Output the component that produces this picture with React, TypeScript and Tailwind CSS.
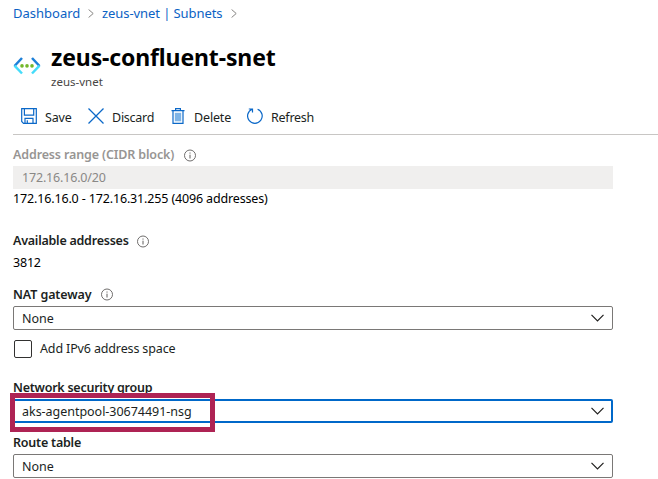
import React from "react";

const Info = () => (
  <svg className="mt-px h-[13px] w-[13px] shrink-0" viewBox="0 0 13 13" fill="none" stroke="#605e5c">
    <circle cx="6" cy="6.5" r="5.5" strokeWidth="0.9" />
    <path d="M6 5.7V9.5M6 3.5V4.6" strokeWidth="1" />
  </svg>
);

const Chevron = () => (
  <svg className="h-2 w-[14px] shrink-0" viewBox="0 0 14 8" fill="none" stroke="#201f1e" strokeWidth="1.2">
    <path d="M0.5 0.8L6.5 6.9L12.5 0.8" />
  </svg>
);

const Crumb = () => (
  <svg className="h-[9px] w-[6px] shrink-0" viewBox="0 0 6 9" fill="none" stroke="#868482" strokeWidth="1">
    <path d="M0.6 0.5L5.2 4.5L0.6 8.5" />
  </svg>
);

function Label({ text, className, info }: { text: string; className: string; info?: boolean }) {
  return (
    <div className="flex h-5 items-center">
      <span className={"shrink-0 font-semibold " + className}>{text}</span>
      {info && <Info />}
    </div>
  );
}

function Select({ text, className, active }: { text: string; className: string; active?: boolean }) {
  return (
    <div
      className={
        "flex h-6 w-[600px] items-center justify-between rounded-[2px] " +
        (active ? "border-2 border-[#0068c9] pr-[6px] pl-[7px]" : "border border-[#7a7876] pr-[7px] pl-2")
      }
    >
      <span className={"mt-0.5 " + className}>{text}</span>
      <Chevron />
    </div>
  );
}

export default function App() {
  return (
    <div className="h-[479px] w-[658px] overflow-hidden bg-white pl-[13px] font-['Noto_Sans','Open_Sans',sans-serif] text-[12.5px] leading-5 whitespace-nowrap text-[#201f1e]">
      <nav className="flex h-[26px] items-center text-[13px] text-[#0b62c4]">
        <span className="w-[75px]">Dashboard</span>
        <Crumb />
        <span className="ml-2 w-[129px] tracking-[-0.08px]">zeus-vnet | Subnets</span>
        <Crumb />
      </nav>

      <header className="flex h-[74px] pt-[17px]">
        <svg className="mt-[14px] h-[18px] w-[28px] shrink-0" viewBox="0 0 28 18" fill="none" strokeWidth="2.5">
          <path d="M9 1L1.5 9" stroke="#1c7fd8" />
          <path d="M1.5 8.7L9 16.5" stroke="#45dcfa" />
          <path d="M19 1L26.5 9" stroke="#1c7fd8" />
          <path d="M26.5 8.7L19 16.5" stroke="#45dcfa" />
          <g fill="#74b72b">
            <circle cx="9" cy="8.9" r="1.8" />
            <circle cx="14" cy="8.9" r="1.8" />
            <circle cx="19" cy="8.9" r="1.8" />
          </g>
        </svg>
        <div className="ml-[10px]">
          <h1 className="h-[29px] text-[23px] leading-7 font-bold tracking-[-0.13px] text-black">zeus-confluent-snet</h1>
          <p className="text-[11.5px] leading-5 text-[#484644]">zeus-vnet</p>
        </div>
      </header>

      <div className="flex h-[35px] items-center border-b border-[#c8c6c4] pl-2">
        <svg className="-mt-0.5 h-4 w-4 shrink-0" viewBox="0 0 16 16" fill="none" stroke="#0b68c8" strokeWidth="1.2">
          <path d="M.7.7H15.3V15.3H2.5L.7 13.5Z" />
          <path d="M3.4.7V7.2H12.7V.7M4 15V10.4H12V15M6.3 12.3V15" />
        </svg>
        <span className="mt-px ml-2 w-[43px] tracking-[-0.2px]">Save</span>
        <svg className="-mt-0.5 h-4 w-4 shrink-0" viewBox="0 0 16 16" fill="none" stroke="#0b68c8" strokeWidth="1.3">
          <path d="M.5.5L15.5 15.5M15.5.5L.5 15.5" />
        </svg>
        <span className="mt-px ml-2 w-[59px] tracking-[-0.25px]">Discard</span>
        <svg className="-mt-0.5 h-4 w-[14px] shrink-0" viewBox="0 0 14 16" fill="none" stroke="#0b68c8" strokeWidth="1.2">
          <path d="M.5 2.6H13.5M4.6 2.4V.6H9.4V2.4M2 2.8V15.3H12V2.8" />
          <path d="M3.8 4.8H10.2V13.3H3.8Z" fill="#7fb4e6" stroke="none" />
        </svg>
        <span className="mt-px ml-[9px] w-[53px] tracking-[-0.15px]">Delete</span>
        <svg className="-mt-0.5 h-4 w-4 shrink-0" viewBox="0 0 16 16" fill="none" stroke="#0b68c8" strokeWidth="1.2">
          <path d="M5.2 1.2A7.3 7.3 0 1 0 10.6 1.2M1.8 1H5.5V4.6" />
        </svg>
        <span className="mt-px ml-2 tracking-[-0.25px]">Refresh</span>
      </div>

      <main>
        <div className="h-[31px] pt-[10px]">
          <Label text="Address range (CIDR block)" className="w-[171px] tracking-[-0.14px] text-[#979593]" info />
        </div>
        <div className="flex h-[23px] w-[600px] items-center bg-[#f0efee] pl-[9px] tracking-[-0.18px] text-[#8a8886]">
          172.16.16.0/20
        </div>
        <p className="h-[42px] tracking-[-0.15px] text-black">172.16.16.0 - 172.16.31.255 (4096 addresses)</p>
        <Label text="Available addresses" className="w-[124px] tracking-[-0.24px]" info />
        <p className="h-[33px] pt-[2px] tracking-[-0.2px] text-black">3812</p>
        <div className="h-[22px]">
          <Label text="NAT gateway" className="mt-0.5 w-[88px] tracking-[-0.1px]" info />
        </div>
        <Select text="None" className="" />
        <div className="flex h-[47px] pt-[10px]">
          <span className="ml-px h-[18px] w-[18px] rounded-[2px] border border-[#323130]" />
          <span className="-mt-px ml-2 tracking-[-0.14px]">Add IPv6 address space</span>
        </div>
        <div className="h-[22px] pt-px">
          <Label text="Network security group" className="tracking-[-0.25px]" />
        </div>
        <div className="relative">
          <Select text="aks-agentpool-30674491-nsg" className="tracking-[-0.03px]" active />
          <div className="absolute -top-[6px] -left-[3px] h-[39px] w-[205px] border-[5px] border-[#ae2354]" />
        </div>
        <div className="h-[31px] pt-[10px]">
          <Label text="Route table" className="tracking-[-0.22px]" />
        </div>
        <Select text="None" className="" />
      </main>
    </div>
  );
}
